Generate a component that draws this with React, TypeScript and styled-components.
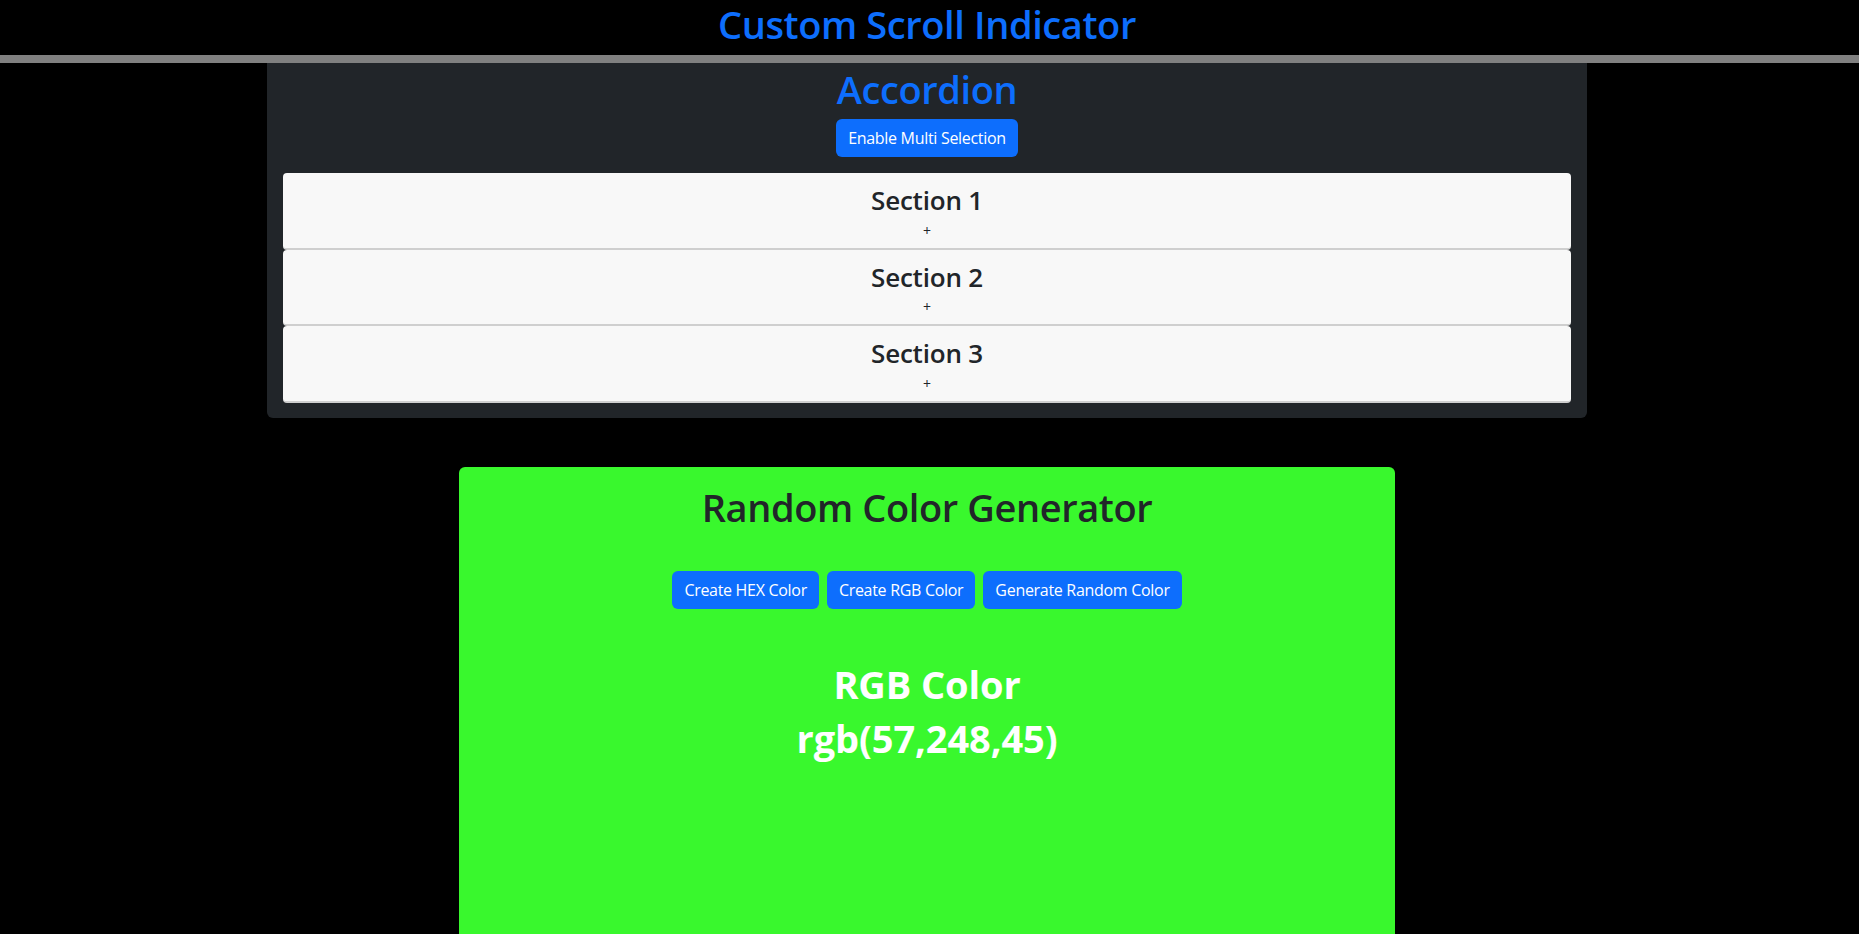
import React, { useState } from 'react';
import styled, { createGlobalStyle } from 'styled-components';

const sections = [
    { id: 1, title: 'Section 1', body: 'Content of section 1' },
    { id: 2, title: 'Section 2', body: 'Content of section 2' },
    { id: 3, title: 'Section 3', body: 'Content of section 3' },
];

const randomInt = (max: number) => Math.floor(Math.random() * max);

const makeHex = () => {
    const digits = '0123456789ABCDEF';
    let hex = '#';
    for (let i = 0; i < 6; i++) hex += digits[randomInt(16)];
    return hex;
};

const makeRgb = () => `rgb(${randomInt(256)},${randomInt(256)},${randomInt(256)})`;

const App: React.FC = () => {
    const [multi, setMulti] = useState(false);
    const [open, setOpen] = useState<number[]>([]);
    const [colorType, setColorType] = useState<'hex' | 'rgb'>('rgb');
    const [color, setColor] = useState('rgb(57,248,45)');

    const toggle = (id: number) => {
        if (multi) {
            setOpen(prev => (prev.includes(id) ? prev.filter(x => x !== id) : [...prev, id]));
        } else {
            setOpen(prev => (prev.includes(id) ? [] : [id]));
        }
    };

    const generate = () => setColor(colorType === 'hex' ? makeHex() : makeRgb());

    return (
        <>
            <GlobalStyle />
            <Header>
                <PageTitle>{'Custom Scroll Indicator'}</PageTitle>
            </Header>
            <ScrollTrack>
                <ScrollFill style={{ width: '0%' }} />
            </ScrollTrack>

            <Main>
                <AccordionPanel>
                    <PanelTitle>{'Accordion'}</PanelTitle>
                    <Button onClick={() => setMulti(m => !m)}>
                        {multi ? 'Disable Multi Selection' : 'Enable Multi Selection'}
                    </Button>
                    <ItemList>
                        {sections.map(s => (
                            <Item key={s.id} onClick={() => toggle(s.id)}>
                                <ItemTitle>{s.title}</ItemTitle>
                                <Toggle>{open.includes(s.id) ? '-' : '+'}</Toggle>
                                {open.includes(s.id) && <ItemBody>{s.body}</ItemBody>}
                            </Item>
                        ))}
                    </ItemList>
                </AccordionPanel>

                <ColorCard style={{ background: color }}>
                    <CardTitle>{'Random Color Generator'}</CardTitle>
                    <ButtonRow>
                        <Button onClick={() => setColorType('hex')}>{'Create HEX Color'}</Button>
                        <Button onClick={() => setColorType('rgb')}>{'Create RGB Color'}</Button>
                        <Button onClick={generate}>{'Generate Random Color'}</Button>
                    </ButtonRow>
                    <Result>
                        <ResultLine>{colorType === 'hex' ? 'HEX Color' : 'RGB Color'}</ResultLine>
                        <ResultLine>{color}</ResultLine>
                    </Result>
                </ColorCard>
            </Main>
        </>
    );
};
export default App;

const GlobalStyle = createGlobalStyle`
    body {
        margin: 0;
        background: #000;
        font-family: "Open Sans", "Noto Sans", sans-serif;
        -webkit-font-smoothing: antialiased;
    }
    * { box-sizing: border-box; }
`;

const Header = styled.header`
    height: 55px;
    display: flex;
    justify-content: center;
    padding-right: 5px;
`;

const PageTitle = styled.h1`
    margin: 0;
    font-size: 38px;
    line-height: 48px;
    font-weight: 600;
    color: #0d6efd;
    letter-spacing: -0.4px;
`;

const ScrollTrack = styled.div`
    height: 8px;
    background: #808080;
`;

const ScrollFill = styled.div`
    height: 100%;
    background: #0d6efd;
`;

const Main = styled.main`
    display: flex;
    flex-direction: column;
    align-items: center;
    padding-right: 5px;
`;

const AccordionPanel = styled.section`
    width: 1320px;
    background: #212529;
    border-radius: 0 0 6px 6px;
    padding: 0 16px 15px;
    display: flex;
    flex-direction: column;
    align-items: center;
`;

const PanelTitle = styled.h1`
    margin: 0 0 6px;
    padding-top: 2px;
    font-size: 38px;
    line-height: 48px;
    font-weight: 600;
    color: #0d6efd;
    letter-spacing: -0.4px;
`;

const Button = styled.button`
    height: 38px;
    padding: 0 12px;
    border: none;
    border-radius: 6px;
    background: #0d6efd;
    color: #fff;
    font-family: inherit;
    font-size: 16px;
    line-height: 38px;
    letter-spacing: -0.3px;
    cursor: pointer;

    &:hover {
        background: #0b5ed7;
    }
`;

const ItemList = styled.div`
    align-self: stretch;
    display: flex;
    flex-direction: column;
    margin-top: 16px;
`;

const Item = styled.div`
    background: #f8f8f8;
    border-radius: 4px;
    border-bottom: 2px solid #cfcfcf;
    padding: 10px 8px 8px;
    text-align: center;
    cursor: pointer;
`;

const ItemTitle = styled.h3`
    margin: 0;
    font-size: 26px;
    line-height: 34.6px;
    font-weight: 600;
    color: #212529;
    letter-spacing: -0.2px;
`;

const Toggle = styled.div`
    margin-top: 4px;
    font-size: 14px;
    line-height: 18px;
    color: #212529;
`;

const ItemBody = styled.p`
    margin: 8px 0 0;
    font-size: 16px;
    color: #212529;
`;

const ColorCard = styled.section`
    width: 936px;
    min-height: 560px;
    margin-top: 49px;
    margin-bottom: 40px;
    border-radius: 6px;
    padding-top: 16px;
    display: flex;
    flex-direction: column;
    align-items: center;
`;

const CardTitle = styled.h1`
    margin: 0;
    font-size: 38px;
    line-height: 48px;
    font-weight: 600;
    color: #212529;
    letter-spacing: -0.4px;
`;

const ButtonRow = styled.div`
    display: flex;
    gap: 8px;
    margin-top: 40px;
`;

const Result = styled.div`
    margin-top: 49px;
    display: flex;
    flex-direction: column;
    align-items: center;
`;

const ResultLine = styled.h2`
    margin: 0 0 2px;
    font-size: 38px;
    line-height: 52px;
    font-weight: 700;
    color: #fff;
    letter-spacing: -0.1px;
`;
